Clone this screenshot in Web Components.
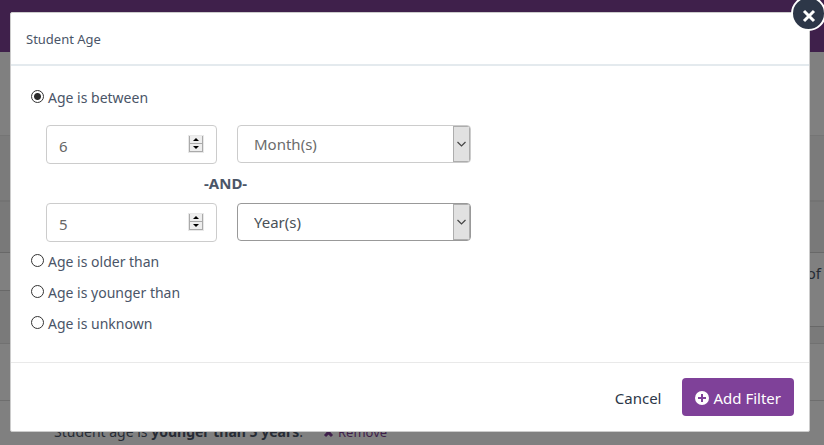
<!DOCTYPE html>
<html lang="en">
<head>
<meta charset="utf-8">
<meta name="viewport" content="width=device-width, initial-scale=1">
<title>Student Age</title>
<style>
body { margin: 0; font-family: "Noto Sans", sans-serif; font-size: 14px; line-height: 20px; color: #4a5568; }
</style>
</head>
<body>
<filter-screen></filter-screen>
<script>
const define = (name, html, setup) => {
  const template = document.createElement('template');
  template.innerHTML = html;
  customElements.define(name, class extends HTMLElement {
    connectedCallback() {
      if (this.shadowRoot) return;
      this.attachShadow({ mode: 'open' }).append(template.content.cloneNode(true));
      if (setup) setup(this, this.shadowRoot);
    }
  });
};

/* Dimmed page behind the dialog */
define('page-backdrop', `
<style>
:host { display: flex; flex-direction: column; background: #808080; color: #262b34; }
div { box-sizing: border-box; flex: none; }
.bar { height: 52px; background: #3f204b; }
.intro { height: 84px; border-bottom: 1px solid #757575; }
.band { height: 66px; background: #7b7b7b; border-bottom: 2px solid #737373; }
.shade { height: 51px; background: #797979; border-bottom: 1px solid #686868; }
.table { display: grid; grid-template-columns: 1fr 1fr; height: 91px; background: #7a7a7a; border-bottom: 1px solid #717171; }
.left { height: 38px; background: #808080; border-bottom: 1px solid #686868; }
.right { height: 74px; background: #808080; border-bottom: 1px solid #686868; padding: 10px 3px; text-align: right; font-size: 15px; }
.rule { height: 57px; border-bottom: 1px solid #6e6e6e; }
.applied { display: flex; gap: 20px; padding: 21px 54px; white-space: nowrap; }
a { display: flex; align-items: center; gap: 4px; font-size: 13px; color: #3f204b; text-decoration: none; }
</style>
<div class="bar"></div><div class="intro"></div><div class="band"></div><div class="shade"></div>
<div class="table"><div class="left"></div><div class="right">of</div></div>
<div class="rule"></div>
<div class="applied"><span>Student age is <b>younger than 5 years</b>.</span>
<a href="#"><svg width="11" height="11" viewBox="0 0 11 11" aria-hidden="true"><path d="M2 2l7 7M9 2l-7 7" stroke="currentColor" stroke-width="3"/></svg>Remove</a></div>`);

define('modal-dialog', `
<style>
:host { display: block; position: relative; background: #fff; border: 1px solid #ccc; border-radius: 2px; }
header { padding: 16px 15px 15px; border-bottom: 2px solid #e4eaee; font-size: 13px; }
h2 { margin: 0; font: inherit; }
main { padding: 16px 20px 23px; }
footer { display: flex; justify-content: flex-end; gap: 8px; padding: 15px; border-top: 1px solid #e9e9e9; }
.close { position: absolute; top: -17px; right: -17px; box-sizing: border-box; width: 35px; height: 35px; padding: 4px 0 0; display: grid; place-items: center; border: 2px solid #fff; border-radius: 50%; background: #2d3748; color: #fff; }
</style>
<header><h2><slot name="title"></slot></h2></header>
<button class="close" type="button" aria-label="Close"><svg width="14" height="14" viewBox="0 0 14 14" aria-hidden="true"><path d="M2 2l10 10M12 2l-10 10" stroke="currentColor" stroke-width="3"/></svg></button>
<main><slot></slot></main>
<footer><slot name="actions"></slot></footer>`);

define('radio-option', `
<style>
:host { display: block; }
label { display: flex; align-items: center; gap: 4px; height: 31px; }
input { appearance: none; box-sizing: border-box; width: 13px; height: 13px; margin: 0 0 2px; border: 1px solid #333; border-radius: 50%; background: #fff; }
input:checked { background: radial-gradient(circle, #2b2b2b 3px, #fff 4px); }
</style>
<label><input type="radio" name="age"><slot></slot></label>`,
(host, root) => { root.querySelector('input').checked = host.hasAttribute('checked'); });

define('number-field', `
<style>
:host { box-sizing: border-box; display: flex; align-items: center; width: 171px; height: 39px; padding: 0 12px; border: 1px solid #ccc; border-radius: 4px; background: #fff; }
input { appearance: textfield; flex: 1; min-width: 0; padding: 2px 0 0; border: 0; outline: 0; background: none; font: inherit; color: #666; }
input::-webkit-inner-spin-button { appearance: none; }
.spin { display: flex; flex-direction: column; margin-bottom: 1px; background: #f0f0f0; border: 1px solid #e8e8e8; }
button { box-sizing: border-box; display: grid; place-items: center; width: 14px; height: 8px; padding: 0; border: solid #aaa; border-width: 0 1px 1px; background: #eee; }
</style>
<input type="number">
<span class="spin"><button type="button" aria-label="Increase"><svg width="6" height="3" viewBox="0 0 6 3"><path d="M0 3L3 0l3 3z"/></svg></button><button type="button" aria-label="Decrease"><svg width="6" height="3" viewBox="0 0 6 3"><path d="M0 0l3 3 3-3z"/></svg></button></span>`,
(host, root) => {
  const input = root.querySelector('input');
  input.value = host.getAttribute('value');
  input.setAttribute('aria-label', host.getAttribute('label'));
  const [up, down] = root.querySelectorAll('button');
  up.onclick = () => input.stepUp();
  down.onclick = () => input.stepDown();
});

define('unit-select', `
<style>
:host { box-sizing: border-box; display: grid; grid-template-columns: 1fr 17px; width: 234px; height: 38px; border: 1px solid #ccc; border-radius: 4px; background: #fff; color: #6b6b6b; overflow: hidden; }
:host([active]) { border-color: #999; color: #495057; }
select { appearance: none; grid-area: 1 / 1 / 2 / 3; min-width: 0; padding: 0 16px; border: 0; outline: 0; background: none; font: inherit; color: inherit; }
.arrow { grid-area: 1 / 2; display: grid; place-items: center; border: 1px solid #adadad; background: #e1e1e1; pointer-events: none; color: #444; }
</style>
<select><option>Day(s)</option><option>Month(s)</option><option>Year(s)</option></select>
<span class="arrow"><svg width="9" height="6" viewBox="0 0 9 6" fill="none" aria-hidden="true"><path d="M.5 1l4 4 4-4" stroke="currentColor" stroke-width="1.2"/></svg></span>`,
(host, root) => {
  const select = root.querySelector('select');
  select.value = host.getAttribute('value');
  select.setAttribute('aria-label', host.getAttribute('label'));
});

define('age-range', `
<style>
:host { display: block; width: fit-content; padding: 12px 0 4px 15px; font-size: 15px; }
.row { display: flex; gap: 20px; height: 39px; }
.and { height: 39px; line-height: 39px; padding-left: 158px; font-weight: bold; }
</style>
<div class="row"><number-field value="6" label="Minimum age"></number-field><unit-select value="Month(s)" label="Minimum age unit"></unit-select></div>
<div class="and">-AND-</div>
<div class="row"><number-field value="5" label="Maximum age"></number-field><unit-select value="Year(s)" label="Maximum age unit" active></unit-select></div>`);

define('action-button', `
<style>
:host { display: block; font-size: 15px; }
button { box-sizing: border-box; height: 38px; padding: 2px 13px 0; display: flex; align-items: center; gap: 4px; border: 0; border-radius: 4px; background: none; font: inherit; color: #2d3748; }
:host([primary]) button { background: #7f4199; color: #fff; }
svg { display: none; }
:host([primary]) svg { display: block; }
</style>
<button type="button"><svg width="14" height="14" viewBox="0 0 14 14" aria-hidden="true"><circle cx="7" cy="7" r="7" fill="#fff"/><path d="M7 3v8M3 7h8" stroke="#7f4199" stroke-width="2"/></svg><slot></slot></button>`);

/* One selection across the options, whose inputs sit in separate roots */
define('filter-screen', `
<style>
:host { display: block; position: relative; min-height: 100vh; box-sizing: border-box; padding: 12px 14px 13px 10px; overflow: hidden; }
page-backdrop { position: absolute; inset: 0; }
</style>
<page-backdrop></page-backdrop>
<modal-dialog>
<span slot="title">Student Age</span>
<radio-option checked>Age is between</radio-option>
<age-range></age-range>
<radio-option>Age is older than</radio-option>
<radio-option>Age is younger than</radio-option>
<radio-option>Age is unknown</radio-option>
<action-button slot="actions">Cancel</action-button>
<action-button slot="actions" primary>Add Filter</action-button>
</modal-dialog>`,
(host, root) => {
  const inputs = [...root.querySelectorAll('radio-option')].map(o => o.shadowRoot.querySelector('input'));
  inputs.forEach(i => i.addEventListener('click', () => inputs.forEach(o => { o.checked = o === i; })));
});
</script>
</body>
</html>
